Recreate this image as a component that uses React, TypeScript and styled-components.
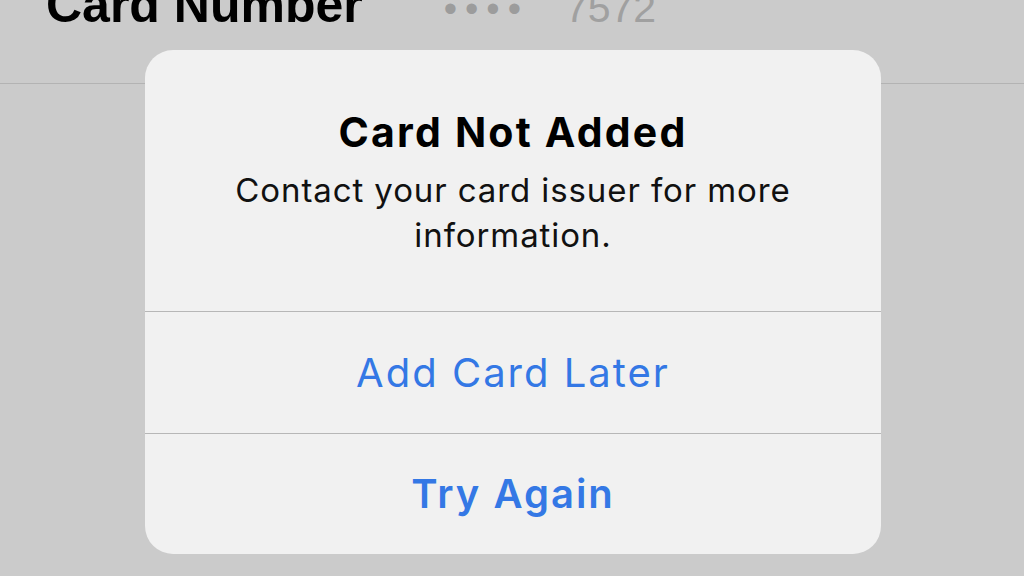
import React from "react";
import styled, { createGlobalStyle } from "styled-components";

const Global = createGlobalStyle`
  html, body { margin: 0; padding: 0; }
  body {
    width: 1024px;
    height: 576px;
    overflow: hidden;
    background: #cbcbcb;
    font-family: Inter, "Noto Sans", sans-serif;
  }
`;

const Screen = styled.div`
  position: relative;
  width: 1024px;
  height: 576px;
  background: #cbcbcb;
  overflow: hidden;
`;

const FieldRow = styled.div`
  display: flex;
  align-items: baseline;
  gap: 84px;
  height: 104px;
  margin-top: -20px;
  box-sizing: border-box;
  border-bottom: 1px solid #b3b3b3;
  padding-left: 46px;
`;

const FieldLabel = styled.span`
  font-family: "Liberation Sans", Arial, sans-serif;
  font-weight: 700;
  font-size: 50px;
  line-height: 50px;
  color: #000;
`;

const FieldValue = styled.span`
  font-family: "Liberation Sans", Arial, sans-serif;
  font-weight: 400;
  font-size: 41px;
  color: #a0a0a0;
  display: flex;
  align-items: baseline;
  gap: 36px;
`;

const Dots = styled.span`
  font-size: 38px;
  letter-spacing: 8px;
  margin-left: -3px;
  color: #9c9c9c;
`;

const Alert = styled.div`
  position: absolute;
  left: 145px;
  top: 50px;
  width: 736px;
  height: 504px;
  background: #f1f1f1;
  border-radius: 28px;
  display: flex;
  flex-direction: column;
  overflow: hidden;
`;

const Header = styled.div`
  height: 262px;
  box-sizing: border-box;
  padding: 58px 40px 0;
  text-align: center;
  border-bottom: 1px solid #b7b7b7;
`;

const Title = styled.div`
  font-weight: 700;
  font-size: 41px;
  line-height: 48px;
  color: #000;
  letter-spacing: 2.2px;
`;

const Message = styled.div`
  margin-top: 12px;
  font-size: 33px;
  line-height: 45px;
  color: #111;
  letter-spacing: 0.9px;
`;

const Action = styled.div<{ $bold?: boolean; $last?: boolean }>`
  flex: 1;
  display: flex;
  align-items: center;
  justify-content: center;
  font-size: 40px;
  font-weight: ${(p) => (p.$bold ? 600 : 400)};
  letter-spacing: 2px;
  color: #3478e5;
  border-bottom: ${(p) => (p.$last ? "none" : "1px solid #b7b7b7")};
`;

export default function App() {
  return (
    <>
      <Global />
      <Screen>
        <FieldRow>
          <FieldLabel>Card Number</FieldLabel>
          <FieldValue>
            <Dots>••••</Dots>
            <span>7572</span>
          </FieldValue>
        </FieldRow>
        <Alert>
          <Header>
            <Title>Card Not Added</Title>
            <Message>
              Contact your card issuer for more
              <br />
              information.
            </Message>
          </Header>
          <Action>Add Card Later</Action>
          <Action $bold $last>
            Try Again
          </Action>
        </Alert>
      </Screen>
    </>
  );
}
